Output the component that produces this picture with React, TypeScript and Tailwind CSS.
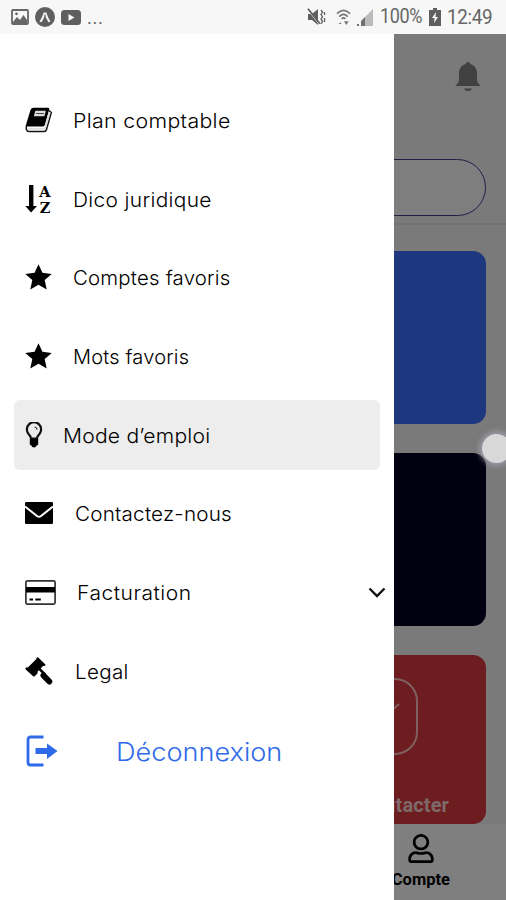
import React from 'react';
import { FaRegUser } from 'react-icons/fa';

interface MenuItem {
  label: string;
  icon: React.ReactNode;
  textClass: string;
  active?: boolean;
  expandable?: boolean;
}

const BookIcon = () => (
  <svg width="28" height="26" viewBox="0 0 28 26">
    <path d="M8.500 .8h14.500q1.700 0 1.200 1.800L20 17.700q-.5 1.800-2.400 1.800H3Q.500 19.500 1.500 16L5.500 3Q6.300 .8 8.500 .8z" fill="#000" />
    <path d="M1.700 17.500Q.2 24.500 4 24.500h15.300q1.600 0 2.100-1.700L26.300 5.500 24 3.500" fill="none" stroke="#111" strokeWidth="1.500" />
    <path d="M3 21.700h15.500q1.300 0 1.800-1.500L24.700 5" fill="none" stroke="#ddd" strokeWidth="2" />
    <path d="M10.300 3.800h10.500l-1.400 5.400H8.900z" fill="#ddd" />
    <path d="M11 6.500h8" stroke="#444" strokeWidth="1" />
  </svg>
);

const SortIcon = () => (
  <svg className="overflow-visible" width="28" height="34" viewBox="0 0 28 34">
    <path d="M4 3h4.400v21H12l-5.900 6.500L.3 24H4z" fill="#000" />
    <text x="20" y="14.500" textAnchor="middle" fontFamily="DejaVu Serif, serif" fontWeight="700" fontSize="14.500">A</text>
    <text x="20" y="30.800" textAnchor="middle" fontFamily="DejaVu Serif, serif" fontWeight="700" fontSize="14.500">Z</text>
  </svg>
);

const StarIcon = () => (
  <svg width="27" height="26" viewBox="0 0 27 26">
    <path d="M13.500 .3l3.900 8.500 9.300 1.100-7 6.200 2 9.300-8.200-4.600-8.200 4.600 2-9.300-7-6.200 9.300-1.100z" fill="#000" />
  </svg>
);

const BulbIcon = () => (
  <svg width="18" height="26" viewBox="0 0 18 26">
    <path d="M6 16.500Q5.600 14 3.400 11.700A7.100 7.100 0 1 1 14.600 11.700Q12.400 14 12 16.500z" fill="none" stroke="#111" strokeWidth="2.200" />
    <path d="M9.500 5q2.300.3 2.700 2.700" fill="none" stroke="#333" strokeWidth="1.200" />
    <path d="M4.800 17h8.400v5.500l-1.700 1.200q-.5 1.800-2.500 1.800t-2.500-1.800l-1.700-1.200z" fill="#000" />
  </svg>
);

const MailIcon = () => (
  <svg width="28" height="22" viewBox="0 0 28 22">
    <rect width="28" height="22" rx="1.200" fill="#000" />
    <path d="M0 4.500l12.300 9.700q1.700 1.200 3.400 0L28 4.500" fill="none" stroke="#fff" strokeWidth="2" />
  </svg>
);

const CardIcon = () => (
  <svg width="31" height="25" viewBox="0 0 31 25">
    <rect x=".9" y=".9" width="29.200" height="23.200" rx="1.500" fill="#fff" stroke="#333" strokeWidth="1.700" />
    <path d="M1 7h29v5.500H1z" fill="#000" />
    <path d="M4.500 19.500H8M10.300 19.500h5.500" stroke="#000" strokeWidth="1.800" />
  </svg>
);

const GavelIcon = () => (
  <svg width="28" height="28" viewBox="0 0 28 28">
    <path d="M12 .5q.8-.5 1.500.2l6.700 6.500q.6.800 0 1.400-1 .8-2 .2l-5.700 6q.5 1-.3 1.900l-2.500 2.500q-.8.700-1.500 0L.7 12.400q-.8-.9 0-1.500 1-.9 2.100-.4l8.400-8.200q0-1.300.8-1.800z" fill="#000" />
    <path d="M14 11.500l6 6" stroke="#000" strokeWidth="2.500" />
    <path d="M18.500 18.500l5.800 6" stroke="#000" strokeWidth="6" strokeLinecap="round" />
  </svg>
);

const LogoutIcon = () => (
  <svg width="32" height="32" viewBox="0 0 32 32">
    <path d="M17.500 2H4.500Q2 2 2 4.500v23Q2 30 4.500 30H17.500" fill="none" stroke="#2f6be8" strokeWidth="2.800" />
    <path d="M9.500 13H21V8.500L31.500 16 21 24v-5H9.500z" fill="#2f6be8" />
  </svg>
);

const BellIcon = () => (
  <svg width="26" height="30" viewBox="0 0 26 30">
    <path d="M13 0q1.900 0 2.300 2 6.300 1.500 6.700 9v6.500q.2 3.500 4 6.500H0q3.800-3 4-6.500V11q.4-7.500 6.700-9 .4-2 2.300-2zM9 26.500h8q-.8 2.500-4 2.500t-4-2.500z" fill="#828282" />
  </svg>
);

const menuItems: MenuItem[] = [
  { label: 'Plan comptable', icon: <BookIcon />, textClass: 'ml-[20px] tracking-[0.32px] scale-x-[1.065]' },
  { label: 'Dico juridique', icon: <SortIcon />, textClass: 'ml-[20px] tracking-[0.32px] scale-x-[1.045]' },
  { label: 'Comptes favoris', icon: <StarIcon />, textClass: 'ml-[21px] tracking-[0.2px] scale-x-[1.020]' },
  { label: 'Mots favoris', icon: <StarIcon />, textClass: 'ml-[21px] tracking-[0.2px]' },
  { label: 'Mode d’emploi', icon: <BulbIcon />, textClass: 'ml-[20px] tracking-[0.2px] scale-x-[1.055]', active: true },
  { label: 'Contactez-nous', icon: <MailIcon />, textClass: 'ml-[22px] tracking-[0.2px] scale-x-[1.033]' },
  { label: 'Facturation', icon: <CardIcon />, textClass: 'ml-[21px] tracking-[0.5px] scale-x-[1.050]', expandable: true },
  { label: 'Legal', icon: <GavelIcon />, textClass: 'ml-[22px] tracking-[0.3px] scale-x-[1.030]' },
];

const StatusBar = () => (
  <div className="flex h-[34px] w-full items-center bg-[#f7f7f7] text-[#666]">
    <svg className="ml-[11px]" width="18" height="16" viewBox="0 0 18 16">
      <rect x="1" y="1" width="16" height="14" rx="1" fill="none" stroke="#666" strokeWidth="1.800" />
      <path d="M2 13l4-5 3 3 3.500-5L16 11v3H2z" fill="#666" />
      <circle cx="5.500" cy="4.800" r="1.400" fill="#666" />
    </svg>
    <svg className="ml-[6px]" width="20" height="20" viewBox="0 0 20 20">
      <circle cx="10" cy="10" r="10" fill="#5f5f5f" />
      <path d="M4.500 14.500Q7 11 8.700 5.500h2.600q1.700 5.500 4.200 9l-2 .8L10 9l-3.500 6.300z" fill="#f7f7f7" />
      <path d="M10 7.500v5" stroke="#5f5f5f" strokeWidth="1.200" />
    </svg>
    <svg className="ml-[6px]" width="20" height="15" viewBox="0 0 20 15">
      <rect width="20" height="15" rx="3.500" fill="#5f5f5f" />
      <path d="M7.500 4l6 3.500-6 3.500z" fill="#f7f7f7" />
    </svg>
    <span className="mt-[2px] ml-[6px] text-[19px] leading-[22px] tracking-[0.500px]">...</span>
    <div className="ml-auto flex w-[199px] items-center">
      <svg width="19" height="18" viewBox="0 0 19 18">
        <path d="M1 6h4l6-5v16l-6-5H1z" fill="#5f5f5f" />
        <path d="M1.500 2.500l11 14" stroke="#f7f7f7" strokeWidth="1.200" />
        <path d="M1 .8l12 15" stroke="#5f5f5f" strokeWidth="1.800" />
        <path d="M14 2l1.500 2.300L14 6.600l1.500 2.300L14 11.200l1.500 2.300L14 16M17.500 4v3m0 3v4" fill="none" stroke="#666" strokeWidth="1.400" />
      </svg>
      <svg className="ml-[10px]" width="15" height="18" viewBox="0 0 16 18">
        <path d="M1 5.500Q8-1.500 15 5.500M3.500 8.500q4.500-4.500 9 0M6 11q2-2 4 0" fill="none" stroke="#777" strokeWidth="1.800" />
        <path d="M4.500 14.500l1.500 2H3zM11 17.500l-2.500-4h5z" fill="#777" />
      </svg>
      <svg className="ml-[5px]" width="17" height="17" viewBox="0 0 17 17">
        <path d="M17 0v17H9V8z" fill="#bbb" />
        <path d="M9 8v9H5v-5zM1 15h2v2H1z" fill="#707070" />
      </svg>
      <div className="ml-[7px] w-[49px]">
        <span className="inline-block origin-left scale-x-[0.880] text-[20.500px] leading-[24px] tracking-[-0.400px]">100%</span>
      </div>
      <svg width="12" height="18" viewBox="0 0 12 18">
        <path d="M4 0h4v2h4v16H0V2h4z" fill="#5f5f5f" />
        <path d="M7 4L3 10h2.500L5 15l4-6H6.500z" fill="#f7f7f7" />
      </svg>
      <span className="ml-[6px] inline-block origin-left scale-x-[0.920] text-[20.500px] leading-[24px] tracking-[-0.400px]">12:49</span>
    </div>
  </div>
);

// Home screen left visible behind the drawer
const HomeScreen = () => (
  <div className="flex h-full w-full flex-col bg-[#f4f4f4]">
    <div className="flex h-[191px] flex-col items-end border-b-2 border-[#e2e2e2] pr-[20px] pt-[28px]">
      <div className="mr-[5px] h-[30px]">
        <BellIcon />
      </div>
      <div className="mt-[67px] h-[57px] w-[466px] shrink-0 rounded-full border border-[#443c90] bg-[#fcfcfc]"></div>
    </div>
    <div className="flex flex-col gap-[29px] px-[20px] pt-[26px]">
      <div className="h-[173px] rounded-[13px] bg-[#3a70fe]"></div>
      <div className="h-[173px] rounded-[13px] bg-[#030020]"></div>
      <div className="flex h-[169px] flex-col items-end rounded-[13px] bg-[#da383e] pt-[23px]">
        <svg className="mr-[68px]" width="76" height="77" viewBox="0 0 76 77">
          <rect x="1" y="1" width="74" height="75" rx="22" fill="none" stroke="#ffc0c0" strokeWidth="2" />
          <path d="M57 26L38 43 18 26" fill="none" stroke="#ffc0c0" strokeWidth="2" />
        </svg>
        <span className="mr-[37px] mt-[38px] text-[20px] font-bold leading-[24px] tracking-[0.100px] text-[#ffd0d0]">Contacter</span>
      </div>
    </div>
    <div className="flex h-[76px] flex-col items-end bg-[#fefefe] pr-[56px] pt-[10px]">
      <FaRegUser className="mr-[16px] h-[29px] w-[26px]" />
      <span className="mt-[6px] text-[16.500px] font-bold leading-[22px]">Compte</span>
    </div>
  </div>
);

const Drawer = () => (
  <nav className="absolute inset-y-0 left-0 flex w-[394px] flex-col bg-white px-[14px] pt-[51px] font-['Inter',sans-serif] text-black">
    <div className="flex flex-col gap-[8.700px]">
      {menuItems.map((item) => (
        <div
          key={item.label}
          className={`flex h-[70px] w-[366px] items-center rounded-[6px] pl-[11px] ${item.active ? 'bg-[#ededed]' : ''}`}
        >
          {item.icon}
          <span className={`mt-[2px] origin-left whitespace-nowrap text-[20px] font-light leading-[28px] ${item.textClass}`}>{item.label}</span>
          {item.expandable && (
            <svg className="mt-[2px] ml-auto -mr-[6px]" width="18" height="12" viewBox="0 0 18 12">
              <path d="M1.500 1.500L9 9l7.500-7.500" fill="none" stroke="#111" strokeWidth="2.400" />
            </svg>
          )}
        </div>
      ))}
    </div>
    <div className="mt-[10px] flex h-[70px] items-center pl-[12px] text-[#2f6be8]">
      <LogoutIcon />
      <span className="mt-[2px] ml-[58px] origin-left scale-x-[1.085] text-[25px] font-light leading-[32px]">Déconnexion</span>
    </div>
  </nav>
);

const App: React.FC = () => {
  return (
    <div className="flex h-[900px] w-[506px] flex-col overflow-hidden font-['Roboto',sans-serif]">
      <StatusBar />
      <div className="relative h-[866px] w-full overflow-hidden">
        <HomeScreen />
        <div className="absolute inset-0 bg-black/50"></div>
        <Drawer />
        {/* touch pointer */}
        <div className="absolute left-[482px] top-[400px] h-[29px] w-[29px] rounded-full bg-[#d8d8d8] shadow-[0_0_5px_3px_rgba(170,170,190,0.6)]"></div>
      </div>
    </div>
  );
};

export default App;
